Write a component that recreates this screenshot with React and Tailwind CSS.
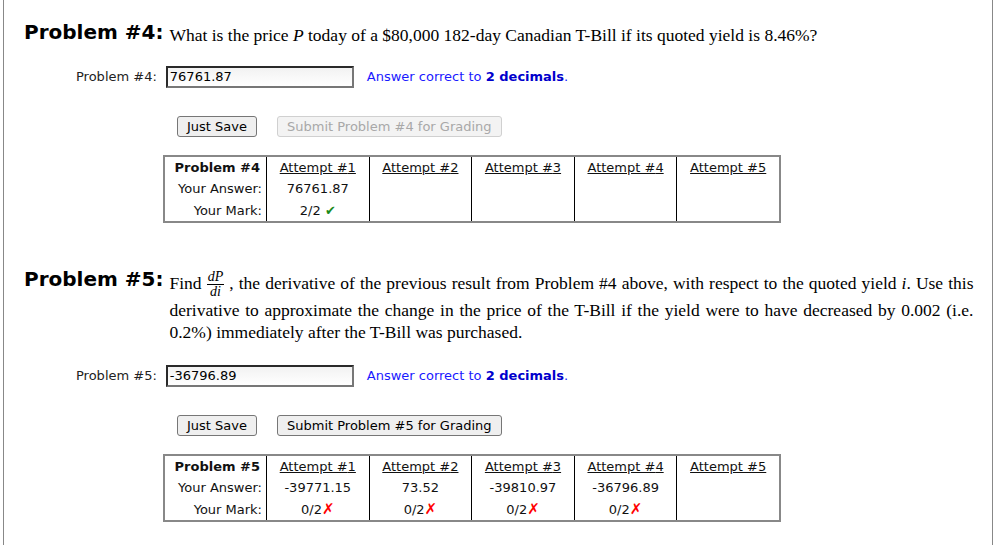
import React from 'react'

const sans = { fontFamily: '"DejaVu Sans", Verdana, sans-serif' }
const serif = { fontFamily: '"Liberation Serif", "Times New Roman", serif' }

const Check = () => <span className="text-[#1a8a1a] text-[13px]">✔</span>
const Cross = () => <span className="text-[#ff0000] text-[15px]">✗</span>

const AnswerRow = ({ label, value }) => (
  <div className="flex items-center ml-[72px] text-[13px]" style={sans}>
    <span className="text-[#222]">{label}</span>
    <div className="ml-[9px] w-[188px] h-[22px] border-2 border-t-[#2a2a2a] border-l-[#2a2a2a] border-b-[#777] border-r-[#777] bg-gradient-to-b from-[#f2f2f2] to-white flex items-center pl-[2px] text-black">
      {value}
    </div>
    <span className="ml-[13px] text-[#1a1aff]">
      Answer correct to <b className="text-[#0000cc]">2 decimals</b>.
    </span>
  </div>
)

const Buttons = ({ n, disabled }) => (
  <div className="flex items-center ml-[173px] gap-[20px] text-[13px]" style={sans}>
    <button className="h-[21px] px-[9px] border border-[#767676] rounded-[3px] bg-[#efefef] text-black leading-none">
      Just Save
    </button>
    {disabled ? (
      <button className="h-[21px] px-[9px] border border-[#d0d0d0] rounded-[3px] bg-[#f3f3f3] text-[#a8a8a8] leading-none">
        Submit Problem #{n} for Grading
      </button>
    ) : (
      <button className="h-[21px] px-[9px] border border-[#767676] rounded-[3px] bg-[#efefef] text-black leading-none">
        Submit Problem #{n} for Grading
      </button>
    )}
  </div>
)

const Attempts = ({ n, answers, marks }) => {
  const cols = [0, 1, 2, 3, 4]
  return (
    <div className="ml-[159px] w-[618px] border-2 border-[#888] flex text-[13px] text-[#111]" style={sans}>
      <div className="w-[101px] flex flex-col">
        <div className="h-[21px] flex items-center justify-end pr-[6px] font-bold">Problem #{n}</div>
        <div className="h-[22px] flex items-center justify-end pr-[4px]">Your Answer:</div>
        <div className="h-[21px] flex items-center justify-end pr-[4px]">Your Mark:</div>
      </div>
      {cols.map((i) => (
        <div key={i} className="flex-1 border-l border-black flex flex-col">
          <div className="h-[21px] flex items-center justify-center">
            <span className="underline">Attempt #{i + 1}</span>
          </div>
          <div className="h-[22px] flex items-center justify-center">{answers[i] || ''}</div>
          <div className="h-[21px] flex items-center justify-center">{marks[i] || ''}</div>
        </div>
      ))}
    </div>
  )
}

const Heading = ({ children }) => (
  <h2 className="text-[20px] leading-[26px] font-bold text-black whitespace-nowrap" style={sans}>
    {children}
  </h2>
)

export default function App() {
  return (
    <div className="bg-white w-[998px] h-[545px] overflow-hidden">
      <div className="ml-[3px] w-[990px] h-full border-l border-r border-[#888] flex flex-col">
        <div className="flex items-start pt-[19px] pl-[20px]">
          <Heading>Problem #4:</Heading>
          <p className="ml-[6px] mt-[5px] text-[17.5px] leading-[22px] text-black whitespace-nowrap" style={serif}>
            What is the price <i>P</i> today of a $80,000 182-day Canadian T-Bill if its quoted yield is 8.46%?
          </p>
        </div>

        <div className="mt-[20px]">
          <AnswerRow label="Problem #4:" value="76761.87" />
        </div>
        <div className="mt-[28px]">
          <Buttons n={4} disabled />
        </div>
        <div className="mt-[18px]">
          <Attempts n={4} answers={['76761.87']} marks={[<span key="m">2/2 <Check /></span>]} />
        </div>

        <div className="flex items-start mt-[43px] pl-[20px]">
          <Heading>Problem #5:</Heading>
          <p className="ml-[6px] mt-[4px] w-[804px] text-justify text-[17.5px] leading-[22px] text-black" style={serif}>
            Find{' '}
            <span className="inline-flex flex-col items-center align-middle text-[14px] leading-[14px] italic">
              <span className="border-b border-black px-[1px]">dP</span>
              <span>di</span>
            </span>{' '}
            , the derivative of the previous result from Problem #4 above, with respect to the quoted yield <i>i</i>. Use this
            derivative to approximate the change in the price of the T-Bill if the yield were to have decreased by 0.002 (i.e.
            0.2%) immediately after the T-Bill was purchased.
          </p>
        </div>

        <div className="mt-[22px]">
          <AnswerRow label="Problem #5:" value="-36796.89" />
        </div>
        <div className="mt-[28px]">
          <Buttons n={5} />
        </div>
        <div className="mt-[18px]">
          <Attempts
            n={5}
            answers={['-39771.15', '73.52', '-39810.97', '-36796.89']}
            marks={[0, 1, 2, 3].map((k) => (
              <span key={k}>0/2<Cross /></span>
            ))}
          />
        </div>
      </div>
    </div>
  )
}
